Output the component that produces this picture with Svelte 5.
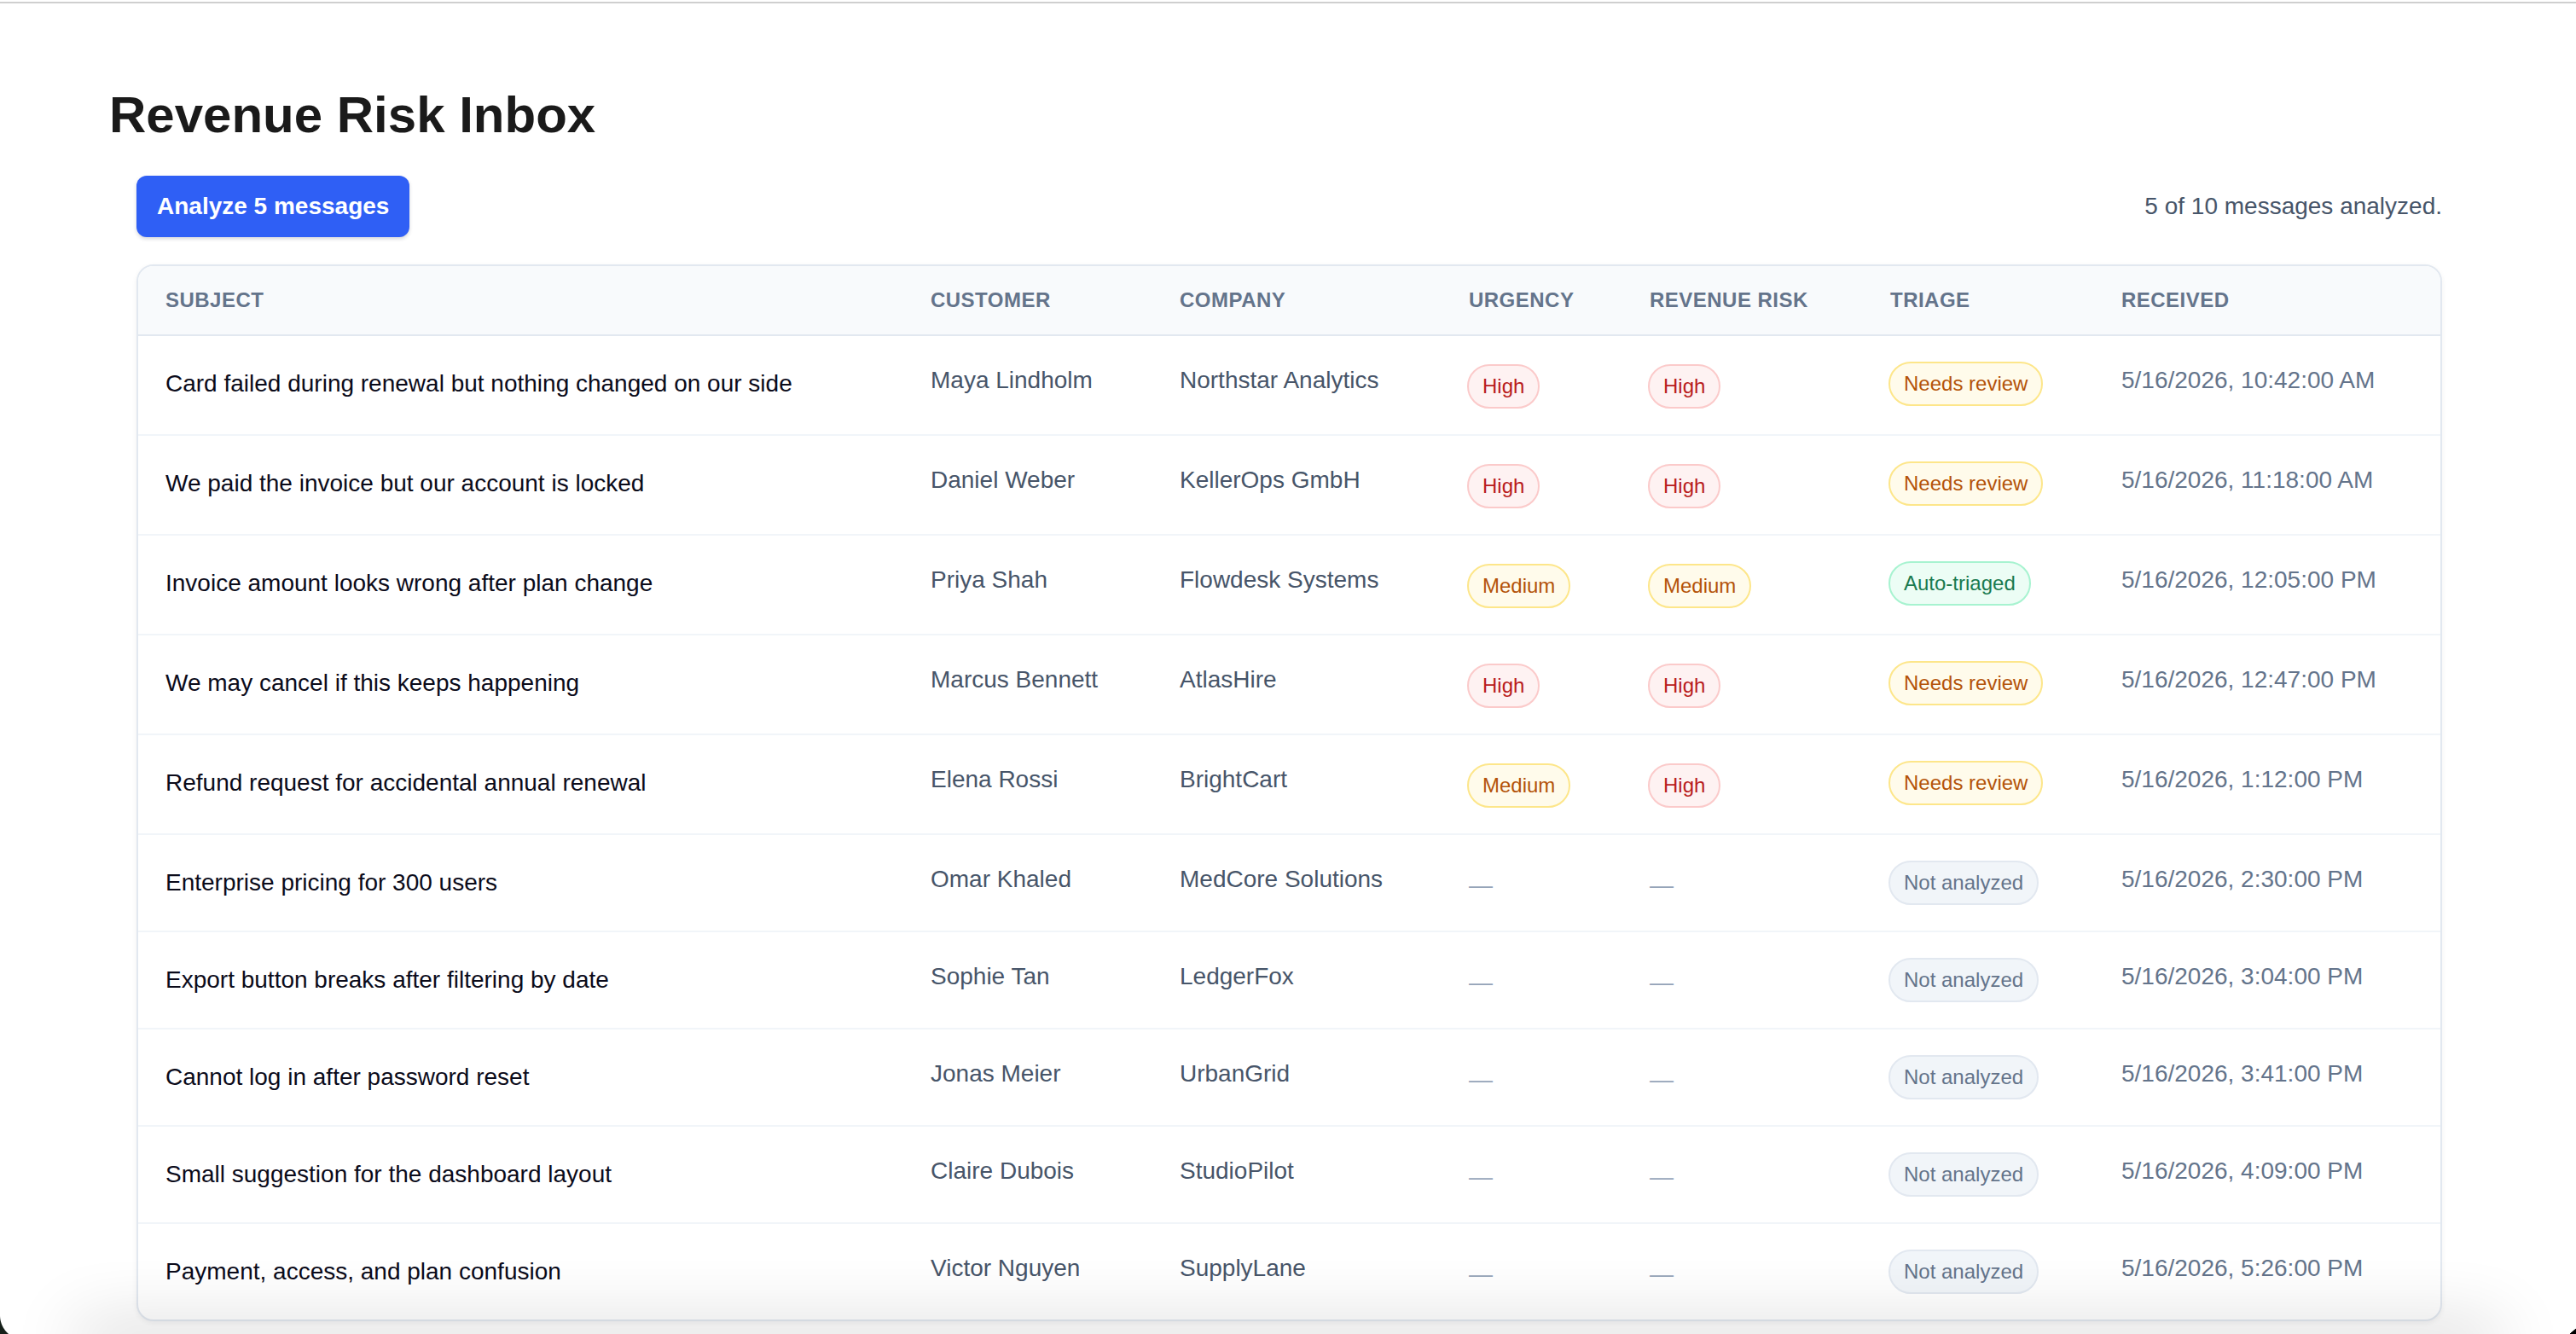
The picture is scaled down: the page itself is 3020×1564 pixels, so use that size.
<script>
	const analyzed = [
		{ subject: 'Card failed during renewal but nothing changed on our side', customer: 'Maya Lindholm', company: 'Northstar Analytics', urgency: 'High', risk: 'High', triage: 'Needs review', received: '5/16/2026, 10:42:00 AM' },
		{ subject: 'We paid the invoice but our account is locked', customer: 'Daniel Weber', company: 'KellerOps GmbH', urgency: 'High', risk: 'High', triage: 'Needs review', received: '5/16/2026, 11:18:00 AM' },
		{ subject: 'Invoice amount looks wrong after plan change', customer: 'Priya Shah', company: 'Flowdesk Systems', urgency: 'Medium', risk: 'Medium', triage: 'Auto-triaged', received: '5/16/2026, 12:05:00 PM' },
		{ subject: 'We may cancel if this keeps happening', customer: 'Marcus Bennett', company: 'AtlasHire', urgency: 'High', risk: 'High', triage: 'Needs review', received: '5/16/2026, 12:47:00 PM' },
		{ subject: 'Refund request for accidental annual renewal', customer: 'Elena Rossi', company: 'BrightCart', urgency: 'Medium', risk: 'High', triage: 'Needs review', received: '5/16/2026, 1:12:00 PM' },
		{ subject: 'Enterprise pricing for 300 users', customer: 'Omar Khaled', company: 'MedCore Solutions', urgency: null, risk: null, triage: 'Not analyzed', received: '5/16/2026, 2:30:00 PM' },
		{ subject: 'Export button breaks after filtering by date', customer: 'Sophie Tan', company: 'LedgerFox', urgency: null, risk: null, triage: 'Not analyzed', received: '5/16/2026, 3:04:00 PM' },
		{ subject: 'Cannot log in after password reset', customer: 'Jonas Meier', company: 'UrbanGrid', urgency: null, risk: null, triage: 'Not analyzed', received: '5/16/2026, 3:41:00 PM' },
		{ subject: 'Small suggestion for the dashboard layout', customer: 'Claire Dubois', company: 'StudioPilot', urgency: null, risk: null, triage: 'Not analyzed', received: '5/16/2026, 4:09:00 PM' },
		{ subject: 'Payment, access, and plan confusion', customer: 'Victor Nguyen', company: 'SupplyLane', urgency: null, risk: null, triage: 'Not analyzed', received: '5/16/2026, 5:26:00 PM' }
	];

	const tone = {
		High: 'red',
		Medium: 'amber',
		'Needs review': 'amber',
		'Auto-triaged': 'green',
		'Not analyzed': 'grey'
	};

	const pending = analyzed.filter((m) => !m.urgency).length;
	const done = analyzed.length - pending;
</script>

<div class="frame">
	<div class="topline"></div>
	<main class="page">
		<h1>Revenue Risk Inbox</h1>
		<section class="content">
			<div class="toolbar">
				<button type="button" class="analyze">Analyze {pending} messages</button>
				<span class="status">{done} of {analyzed.length} messages analyzed.</span>
			</div>
			<div class="table-card">
				<table>
					<thead>
						<tr>
							<th>Subject</th>
							<th>Customer</th>
							<th>Company</th>
							<th>Urgency</th>
							<th>Revenue risk</th>
							<th>Triage</th>
							<th>Received</th>
						</tr>
					</thead>
					<tbody>
						{#each analyzed as m}
							<tr class:scored={m.urgency}>
								<td class="subject">{m.subject}</td>
								<td class="muted">{m.customer}</td>
								<td class="muted">{m.company}</td>
								<td class="level">
									{#if m.urgency}
										<span class="badge {tone[m.urgency]}">{m.urgency}</span>
									{:else}
										<span class="dash">—</span>
									{/if}
								</td>
								<td class="level">
									{#if m.risk}
										<span class="badge {tone[m.risk]}">{m.risk}</span>
									{:else}
										<span class="dash">—</span>
									{/if}
								</td>
								<td class="triage"><span class="badge {tone[m.triage]}">{m.triage}</span></td>
								<td class="muted received">{m.received}</td>
							</tr>
						{/each}
					</tbody>
				</table>
			</div>
		</section>
	</main>
	<div class="corner left"></div>
	<div class="corner right"></div>
</div>

<style>
	:global(body) {
		margin: 0;
		background: #fff;
	}

	.frame {
		position: relative;
		height: 1564px;
		overflow: hidden;
		font-family: 'Liberation Sans', Arial, sans-serif;
		color: #1a1a1a;
	}

	/* window shadow falling over the bottom edge of the capture */
	.frame::after {
		content: '';
		position: absolute;
		left: 90px;
		right: 90px;
		bottom: -30px;
		height: 30px;
		box-shadow: 0 -6px 80px rgba(0, 0, 0, 0.24);
		pointer-events: none;
	}

	.topline {
		height: 2px;
		margin-top: 2px;
		background: #cfcfcf;
	}

	.page {
		padding-left: 128px;
	}

	h1 {
		margin: 0;
		padding-top: 96px;
		font-size: 60px;
		line-height: 69px;
		font-weight: 700;
		color: #1a1a1a;
	}

	.content {
		margin: 37px 157px 0 32px;
	}

	.toolbar {
		display: flex;
		align-items: center;
		justify-content: space-between;
		margin-bottom: 32px;
	}

	.analyze {
		height: 72px;
		padding: 0 24px;
		border: none;
		border-radius: 12px;
		background: #2f5ff5;
		color: #fff;
		font: 700 28px 'Liberation Sans', Arial, sans-serif;
		box-shadow: 0 2px 4px rgba(15, 23, 42, 0.18);
	}

	.status {
		font-size: 28px;
		color: #475569;
	}

	.table-card {
		border: 2px solid #e2e8f0;
		border-radius: 20px;
		overflow: hidden;
		background: #fff;
		box-shadow: 0 2px 6px rgba(15, 23, 42, 0.06);
	}

	table {
		width: 100%;
		table-layout: fixed;
		border-collapse: separate;
		border-spacing: 0;
	}

	th {
		box-sizing: border-box;
		height: 82px;
		padding: 0 32px;
		background: #f8fafc;
		border-bottom: 2px solid #e2e8f0;
		text-align: left;
		font-size: 24px;
		font-weight: 700;
		letter-spacing: 0.48px;
		text-transform: uppercase;
		color: #64748b;
		white-space: nowrap;
	}

	th:nth-child(1) { width: 897px; }
	th:nth-child(2) { width: 292px; }
	th:nth-child(3) { width: 339px; }
	th:nth-child(4) { width: 212px; }
	th:nth-child(5) { width: 282px; }
	th:nth-child(6) { width: 271px; }

	td {
		box-sizing: border-box;
		height: 114px;
		padding: 0 32px;
		border-bottom: 2px solid #f1f5f9;
		vertical-align: middle;
		font-size: 28px;
		white-space: nowrap;
	}

	/* rows with scored badges sit a little taller, content rides high */
	tr.scored td {
		height: 117px;
		padding-bottom: 3px;
	}

	tr:last-child td {
		border-bottom: none;
		height: 112px;
	}

	.subject {
		color: #0b0b1a;
	}

	td.muted {
		padding-bottom: 8px;
		color: #475569;
	}

	tr.scored td.muted {
		padding-bottom: 11px;
	}

	td.received {
		color: #64748b;
	}

	.level {
		padding-left: 30px;
		padding-top: 6px;
	}

	.triage {
		padding-left: 30px;
	}

	.badge {
		display: inline-block;
		padding: 10px 16px;
		border: 2px solid;
		border-radius: 999px;
		font-size: 24px;
		line-height: 28px;
		vertical-align: middle;
	}

	.red {
		background: #fef2f2;
		border-color: #fbcaca;
		color: #b91c1c;
	}

	.amber {
		background: #fffbeb;
		border-color: #fde68a;
		color: #b45309;
	}

	.green {
		background: #ecfdf5;
		border-color: #a7f3d0;
		color: #1a7a4f;
	}

	.grey {
		background: #f1f5f9;
		border-color: #e2e8f0;
		color: #64748b;
	}

	.dash {
		padding-left: 2px;
		color: #94a3b8;
	}

	.corner {
		position: absolute;
		bottom: 0;
	}

	.corner.left {
		left: 0;
		width: 12px;
		height: 22px;
		background: radial-gradient(circle at 29px 0, transparent 28.5px, #16201a 29.5px);
	}

	.corner.right {
		right: 0;
		width: 8px;
		height: 7px;
		background: linear-gradient(to bottom right, transparent 50%, #000 55%);
	}
</style>
